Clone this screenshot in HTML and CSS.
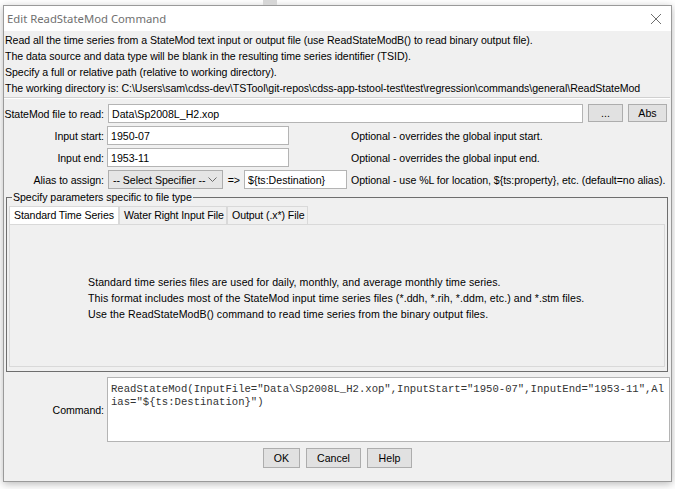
FILE: index.html
```html
<!DOCTYPE html>
<html lang="en">
<head>
    <meta charset="UTF-8">
    <title>Edit ReadStateMod Command</title>
    <link rel="stylesheet" href="styles.css">
</head>
<body>
    <div class="backdrop-bar"></div>

    <div class="dialog">
        <div class="titlebar">
            <span class="title">Edit ReadStateMod Command</span>
            <svg class="close" width="12" height="12" viewBox="0 0 12 12">
                <path d="M1 1 L11 11 M11 1 L1 11" stroke="#6e6e6e" stroke-width="1" fill="none"/>
            </svg>
        </div>

        <div class="content">
            <div class="intro">
                <p>Read all the time series from a StateMod text input or output file (use ReadStateModB() to read binary output file).</p>
                <p>The data source and data type will be blank in the resulting time series identifier (TSID).</p>
                <p>Specify a full or relative path (relative to working directory).</p>
                <p>The working directory is: C:\Users\sam\cdss-dev\TSTool\git-repos\cdss-app-tstool-test\test\regression\commands\general\ReadStateMod</p>
            </div>

            <div class="separator"></div>

            <div class="form-grid">
                <label class="field-label">StateMod file to read:</label>
                <div class="file-row">
                    <input type="text" class="text-input grow" value="Data\Sp2008L_H2.xop">
                    <button class="btn btn-dots">...</button>
                    <button class="btn btn-abs">Abs</button>
                </div>

                <label class="field-label">Input start:</label>
                <div class="cell"><input type="text" class="text-input date-input" value="1950-07"></div>
                <span class="note">Optional - overrides the global input start.</span>

                <label class="field-label">Input end:</label>
                <div class="cell"><input type="text" class="text-input date-input" value="1953-11"></div>
                <span class="note">Optional - overrides the global input end.</span>

                <label class="field-label">Alias to assign:</label>
                <div class="cell alias-row">
                    <div class="combo">
                        <span>-- Select Specifier --</span>
                        <svg width="9" height="6" viewBox="0 0 9 6"><path d="M0.5 0.5 L4.5 4.5 L8.5 0.5" stroke="#6a6a6a" fill="none"/></svg>
                    </div>
                    <span class="arrow">=&gt;</span>
                    <input type="text" class="text-input alias-input" value="${ts:Destination}">
                </div>
                <span class="note">Optional - use %L for location, ${ts:property}, etc. (default=no alias).</span>
            </div>

            <fieldset class="group">
                <legend>Specify parameters specific to file type</legend>
                <div class="tabs">
                    <div class="tab tab-standard active">Standard Time Series</div>
                    <div class="tab tab-water">Water Right Input File</div>
                    <div class="tab tab-output">Output (.x*) File</div>
                </div>
                <div class="tab-panel">
                    <p>Standard time series files are used for daily, monthly, and average monthly time series.</p>
                    <p>This format includes most of the StateMod input time series files (*.ddh, *.rih, *.ddm, etc.) and *.stm files.</p>
                    <p>Use the ReadStateModB() command to read time series from the binary output files.</p>
                </div>
            </fieldset>

            <div class="command-row">
                <label class="field-label">Command:</label>
                <div class="command-text">ReadStateMod(InputFile="Data\Sp2008L_H2.xop",InputStart="1950-07",InputEnd="1953-11",Alias="${ts:Destination}")</div>
            </div>

            <div class="buttons">
                <button class="btn btn-ok">OK</button>
                <button class="btn btn-cancel">Cancel</button>
                <button class="btn btn-help">Help</button>
            </div>
        </div>
    </div>
</body>
</html>
```

FILE: styles.css
```css
* {
    margin: 0;
    padding: 0;
    box-sizing: border-box;
}

body {
    background-color: #ffffff;
    font-family: 'Liberation Sans', Arial, sans-serif;
    font-size: 10.6px;
    letter-spacing: -0.05px;
    color: #000000;
    padding: 5px 3px 7px 3px;
    width: 675px;
    height: 489px;
    overflow: hidden;
}

.backdrop-bar {
    position: absolute;
    left: 263px;
    top: 0;
    width: 14px;
    height: 5px;
    background-color: #d6d6d6;
}

.dialog {
    width: 669px;
    height: 477px;
    border: 1px solid #9a9a9a;
    background-color: #f0f0f0;
    box-shadow: 0 2px 8px rgba(0, 0, 0, 0.28);
    display: flex;
    flex-direction: column;
}

.titlebar {
    height: 25px;
    background-color: #ffffff;
    display: flex;
    align-items: center;
    justify-content: space-between;
    padding: 0 9px 0 3px;
    flex-shrink: 0;
}

.title {
    font-family: 'Noto Sans', 'Open Sans', sans-serif;
    font-size: 11.3px;
    letter-spacing: 0;
    color: #707070;
}

.content {
    padding: 1px 0 0 0;
    display: flex;
    flex-direction: column;
}

.intro {
    padding-left: 1px;
}

.intro p {
    height: 16px;
    line-height: 16px;
    white-space: nowrap;
}

.separator {
    margin: 1px 1px 0 0;
    border-top: 1px solid #d0d0d0;
    border-bottom: 1px solid #ffffff;
}

.form-grid {
    display: grid;
    grid-template-columns: 100px 240px minmax(0, 1fr);
    column-gap: 3px;
    row-gap: 3px;
    margin-top: 5px;
    align-items: center;
}

.field-label {
    text-align: right;
    white-space: nowrap;
}

.file-row {
    grid-column: 2 / 4;
    display: flex;
    gap: 5px;
    padding: 0 4px 0 1px;
}

.cell {
    display: flex;
    align-items: center;
}

.text-input {
    height: 19px;
    border: 1px solid #b4b4b4;
    background-color: #ffffff;
    font-family: 'Liberation Sans', Arial, sans-serif;
    font-size: 10.6px;
    padding: 0 3px;
    color: #000000;
    outline: none;
}

.grow {
    flex: 1;
}

.date-input {
    width: 182px;
}

.alias-row {
    gap: 5px;
}

.combo {
    width: 117px;
    height: 19px;
    border: 1px solid #adadad;
    background-color: #e5e5e5;
    display: flex;
    align-items: center;
    justify-content: space-between;
    padding: 0 5px 0 4px;
    white-space: nowrap;
    margin-left: 1px;
}

.arrow {
    white-space: nowrap;
}

.alias-input {
    width: 103px;
    margin-left: -1px;
}

.note {
    white-space: nowrap;
    padding-left: 1px;
}

.btn {
    height: 18px;
    border: 1px solid #adadad;
    background-color: #e1e1e1;
    font-family: 'Liberation Sans', Arial, sans-serif;
    font-size: 10.6px;
    color: #000000;
}

.btn-dots {
    width: 35px;
}

.btn-abs {
    width: 39px;
}

.group {
    margin: 2px 3px 0 2px;
    border: 1px solid #6e6e6e;
    padding: 2px 2px 1px 2px;
    height: 181px;
}

.group legend {
    margin-left: 3px;
    padding: 0 1px;
}

.tabs {
    display: flex;
    height: 18px;
    margin-top: 1px;
}

.tab {
    border: 1px solid #d9d9d9;
    border-bottom: none;
    padding: 0 4px;
    line-height: 17px;
    white-space: nowrap;
    letter-spacing: -0.1px;
}

.tab.active {
    background-color: #ffffff;
}

.tab-standard {
    width: 110px;
}

.tab-water {
    width: 108px;
}

.tab-output {
    width: 81px;
}

.tab-panel {
    border: 1px solid #d9d9d9;
    height: 143px;
    padding: 49px 0 0 78px;
    background-color: #f0f0f0;
    letter-spacing: 0.07px;
}

.tab-panel p {
    height: 16px;
    line-height: 16px;
    white-space: nowrap;
}

.command-row {
    display: flex;
    align-items: center;
    gap: 3px;
    margin-top: 5px;
}

.command-row .field-label {
    width: 100px;
}

.command-text {
    width: 563px;
    height: 65px;
    background-color: #ffffff;
    border: 1px solid #b4b4b4;
    font-family: 'Liberation Mono', 'Courier New', monospace;
    font-size: 10.6px;
    letter-spacing: 0;
    line-height: 13px;
    color: #333333;
    padding: 5px 3px;
    word-break: break-all;
}

.buttons {
    display: flex;
    justify-content: center;
    gap: 6px;
    margin-top: 6px;
}

.btn-ok {
    width: 37px;
    height: 20px;
}

.btn-cancel {
    width: 55px;
    height: 20px;
}

.btn-help {
    width: 45px;
    height: 20px;
}
```
